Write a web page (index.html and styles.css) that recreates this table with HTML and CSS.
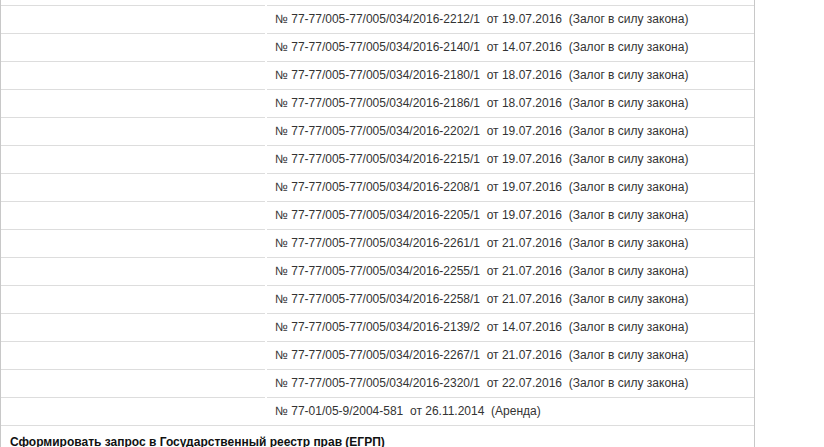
FILE: index.html
```html
<!DOCTYPE html>
<html lang="ru">
<head>
  <meta charset="UTF-8" />
  <title>Обременения</title>
  <link rel="stylesheet" href="styles.css">
</head>
<body>
  <div class="panel">
    <!-- tail of the previous row -->
    <div class="row-tail"></div>

    <div class="row"><div class="cell-left"></div><div class="cell-right">№ 77-77/005-77/005/034/2016-2212/1&nbsp; от 19.07.2016&nbsp; (Залог в силу закона)</div></div>
    <div class="row"><div class="cell-left"></div><div class="cell-right">№ 77-77/005-77/005/034/2016-2140/1&nbsp; от 14.07.2016&nbsp; (Залог в силу закона)</div></div>
    <div class="row"><div class="cell-left"></div><div class="cell-right">№ 77-77/005-77/005/034/2016-2180/1&nbsp; от 18.07.2016&nbsp; (Залог в силу закона)</div></div>
    <div class="row"><div class="cell-left"></div><div class="cell-right">№ 77-77/005-77/005/034/2016-2186/1&nbsp; от 18.07.2016&nbsp; (Залог в силу закона)</div></div>
    <div class="row"><div class="cell-left"></div><div class="cell-right">№ 77-77/005-77/005/034/2016-2202/1&nbsp; от 19.07.2016&nbsp; (Залог в силу закона)</div></div>
    <div class="row"><div class="cell-left"></div><div class="cell-right">№ 77-77/005-77/005/034/2016-2215/1&nbsp; от 19.07.2016&nbsp; (Залог в силу закона)</div></div>
    <div class="row"><div class="cell-left"></div><div class="cell-right">№ 77-77/005-77/005/034/2016-2208/1&nbsp; от 19.07.2016&nbsp; (Залог в силу закона)</div></div>
    <div class="row"><div class="cell-left"></div><div class="cell-right">№ 77-77/005-77/005/034/2016-2205/1&nbsp; от 19.07.2016&nbsp; (Залог в силу закона)</div></div>
    <div class="row"><div class="cell-left"></div><div class="cell-right">№ 77-77/005-77/005/034/2016-2261/1&nbsp; от 21.07.2016&nbsp; (Залог в силу закона)</div></div>
    <div class="row"><div class="cell-left"></div><div class="cell-right">№ 77-77/005-77/005/034/2016-2255/1&nbsp; от 21.07.2016&nbsp; (Залог в силу закона)</div></div>
    <div class="row"><div class="cell-left"></div><div class="cell-right">№ 77-77/005-77/005/034/2016-2258/1&nbsp; от 21.07.2016&nbsp; (Залог в силу закона)</div></div>
    <div class="row"><div class="cell-left"></div><div class="cell-right">№ 77-77/005-77/005/034/2016-2139/2&nbsp; от 14.07.2016&nbsp; (Залог в силу закона)</div></div>
    <div class="row"><div class="cell-left"></div><div class="cell-right">№ 77-77/005-77/005/034/2016-2267/1&nbsp; от 21.07.2016&nbsp; (Залог в силу закона)</div></div>
    <div class="row"><div class="cell-left"></div><div class="cell-right">№ 77-77/005-77/005/034/2016-2320/1&nbsp; от 22.07.2016&nbsp; (Залог в силу закона)</div></div>
    <div class="row"><div class="cell-left"></div><div class="cell-right">№ 77-01/05-9/2004-581&nbsp; от 26.11.2014&nbsp; (Аренда)</div></div>

    <!-- request section -->
    <div class="section-head">Сформировать запрос в Государственный реестр прав (ЕГРП)</div>
  </div>
</body>
</html>
```

FILE: styles.css
```css
body {
  margin: 0;
  font-family: "Liberation Sans", Arial, sans-serif;
  font-size: 12px;
  color: #333;
  background-color: #fff;
}

.panel {
  width: 755px;
  box-sizing: border-box;
  border-left: 1px solid #c8c8c8;
  border-right: 1px solid #c8c8c8;
}

.row-tail {
  height: 5px;
}

.row {
  display: flex;
  gap: 2px;
}

.cell-left,
.cell-right {
  height: 27px;
  border-top: 1px solid #ddd;
  display: flex;
  align-items: center;
}

.cell-left {
  width: 264px;
  flex: none;
}

.cell-right {
  flex: 1;
  padding-left: 8px;
  padding-bottom: 2px;
  box-sizing: border-box;
  height: 28px;
}

.section-head {
  border-top: 1px solid #ddd;
  padding: 9px 9px 6px;
  font-weight: bold;
  color: #111;
}
```
